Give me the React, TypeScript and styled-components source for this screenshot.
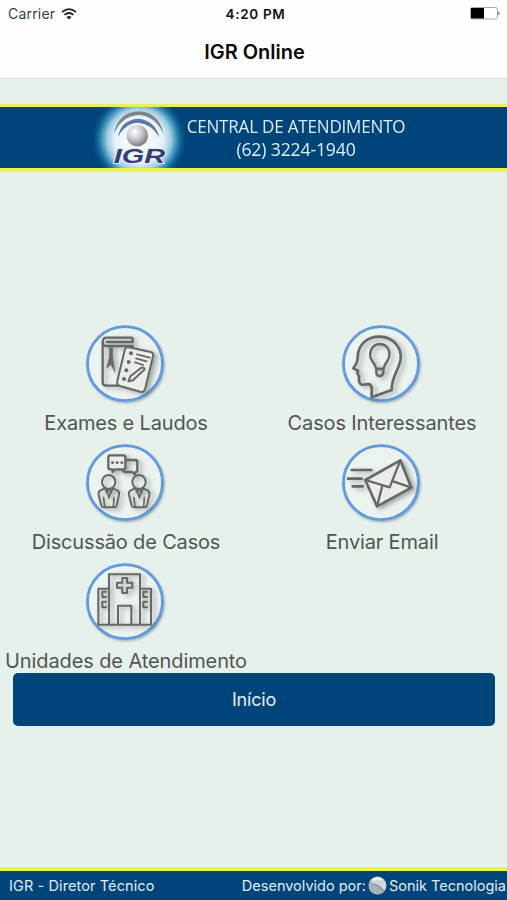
import React from "react";
import styled, { createGlobalStyle } from "styled-components";

const navy = "#00457a";
const mint = "#e6f1eb";
const lime = "#eaf250";

const GlobalStyle = createGlobalStyle`
  * { box-sizing: border-box; }
  body { margin: 0; background: ${mint}; font-family: Inter, "Liberation Sans", sans-serif; }
`;

const Screen = styled.div`
  width: 507px;
  height: 900px;
  display: flex;
  flex-direction: column;
  background: ${mint};
  overflow: hidden;
`;

const Header = styled.header`
  height: 79px;
  background: #fefefe;
  border-bottom: 1px solid #d9dedb;
`;

const StatusBar = styled.div`
  height: 27px;
  display: grid;
  grid-template-columns: 1fr auto 1fr;
  align-items: center;
  padding: 0 7px 0 8px;
`;

const Carrier = styled.div`
  display: flex;
  align-items: center;
  gap: 6px;
  font-size: 14px;
  letter-spacing: 0.2px;
  color: #3c3c3c;
`;

const Clock = styled.div`
  padding-left: 3px;
  font-size: 13.5px;
  font-weight: 600;
  letter-spacing: 0.7px;
  color: #111;
`;

const BatterySlot = styled.div`
  display: flex;
  justify-content: flex-end;
`;

const Title = styled.h1`
  margin: 0;
  height: 51px;
  line-height: 51px;
  text-align: center;
  font-size: 20px;
  font-weight: 600;
  letter-spacing: 0;
  color: #0a0a0a;
  padding-left: 2px;
`;

const Banner = styled.section`
  margin-top: 25px;
  height: 68px;
  flex: none;
  display: flex;
  border-top: 3px solid ${lime};
  border-bottom: 4px solid ${lime};
  background: ${navy};
  padding-left: 90px;
`;

const Phone = styled.div`
  width: 224px;
  margin-left: -16px;
  padding-top: 8px;
  text-align: center;
  font-family: "Open Sans", "Noto Sans", sans-serif;
  font-size: 19px;
  line-height: 23px;
  color: #dfedfa;
  white-space: nowrap;
`;

const PhoneLine = styled.div<{ $stretch: number }>`
  display: flex;
  justify-content: center;
  letter-spacing: -0.2px;
  transform: scaleX(${(p) => p.$stretch});
`;

const Menu = styled.main`
  margin-top: 146px;
  display: grid;
  grid-template-columns: 252px 252px;
  column-gap: 4px;
  grid-auto-rows: 119px;
`;

const MenuItem = styled.div`
  display: flex;
  flex-direction: column;
  align-items: center;
  svg { display: block; flex: none; }
`;

const Label = styled.span<{ $spacing?: number }>`
  font-size: 20px;
  line-height: 31px;
  color: #505653;
  white-space: nowrap;
  letter-spacing: ${(p) => p.$spacing ?? 0}px;
`;

const HomeButton = styled.button`
  margin: -2px 12px 0 13px;
  height: 53px;
  flex: none;
  border: 0;
  border-radius: 5px;
  background: ${navy};
  color: #e3edf6;
  font: 400 18px Inter, sans-serif;
  letter-spacing: -0.2px;
`;

const Footer = styled.footer`
  margin-top: auto;
  height: 33px;
  flex: none;
  display: flex;
  align-items: center;
  justify-content: space-between;
  padding: 0 1px 0 9px;
  border-top: 4px solid ${lime};
  background: ${navy};
  color: #e0ebf4;
  font-size: 14.5px;
  white-space: nowrap;
`;

const Credit = styled.div`
  display: flex;
  align-items: center;
  gap: 2px;
`;

const CreditText = styled.span<{ $spacing: number }>`
  letter-spacing: ${(p) => p.$spacing}px;
`;

const Wifi = () => (
  <svg width="16" height="12" viewBox="0 0 16 12" fill="none" stroke="#222" strokeWidth="1.8">
    <path d="M1 4.2Q8-2 15 4.2M3.5 6.9Q8 3 12.5 6.9" />
    <path d="M5.5 9Q8 6.8 10.5 9L8 11.5Z" fill="#222" stroke="none" />
  </svg>
);

const Battery = () => (
  <svg width="30" height="13" viewBox="0 0 30 13">
    <rect x=".5" y=".5" width="27" height="11.5" rx="2" fill="#fff" stroke="#aaa" />
    <path d="M1 1h13v10.5H1z" fill="#000" />
    <path d="M28.5 4.3q2 2 0 4z" fill="#333" />
  </svg>
);

const IgrLogo = () => (
  <svg width="110" height="61" viewBox="0 27 330 183">
    <defs>
      <radialGradient id="glow">
        <stop offset="0" stopColor="#fff" />
        <stop offset=".5" stopColor="#e6f2f7" />
        <stop offset=".66" stopColor="#9bcbe0" />
        <stop offset=".82" stopColor="#1f7fae" stopOpacity=".85" />
        <stop offset="1" stopColor={navy} stopOpacity="0" />
      </radialGradient>
      <radialGradient id="ball" cx=".38" cy=".32" r=".7">
        <stop offset="0" stopColor="#fff" />
        <stop offset=".45" stopColor="#cfcfd2" />
        <stop offset="1" stopColor="#7b7b80" />
      </radialGradient>
    </defs>
    <ellipse cx="147" cy="124" rx="146" ry="142" fill="url(#glow)" />
    <path d="M72 107Q84 43 147 40Q208 43 221 110Q198 55 147 51Q96 53 72 107Z" fill="#7d858f" />
    <path d="M84 116Q93 66 144 62Q194 66 208 117Q182 76 144 74Q108 74 84 116Z" fill="#5b77ae" />
    <circle cx="142" cy="113" r="32" fill="url(#ball)" />
    <text x="71" y="195" textLength="154" lengthAdjust="spacingAndGlyphs" fontFamily="Liberation Sans, sans-serif" fontSize="59" fontStyle="italic" fontWeight="700" fill="#363b78" stroke="#e6eff6" strokeWidth="5" paintOrder="stroke">IGR</text>
  </svg>
);

const SonikMark = () => (
  <svg width="19" height="19" viewBox="0 0 19 19">
    <circle cx="9.5" cy="9.5" r="9" fill="#d1d5d8" />
    <path d="M1 7Q4 10 8 10T16 16Q12 19 8 18Q2 17 1 11Z" fill="#a8b0b6" />
    <path d="M1.3 5Q3.5 8.7 8 9T16 15.5" fill="none" stroke="#4e7590" strokeWidth="1" />
    <path d="M5 4Q9 1 14 4" fill="none" stroke="#f6f6f6" strokeWidth="2" />
  </svg>
);

const Disc = ({ dy = 0, children }: { dy?: number; children: React.ReactNode }) => (
  <svg width="92" height="90" viewBox="0 0 276 270" fill="none" stroke="#666865" strokeWidth="7" strokeLinejoin="round" strokeLinecap="round">
    <defs>
      <filter id="shade" x="-20%" y="-20%" width="150%" height="150%">
        <feDropShadow dx="10" dy="6" stdDeviation="6" floodColor="#4d5550" floodOpacity=".45" />
      </filter>
      <filter id="rim" x="-20%" y="-20%" width="150%" height="150%">
        <feDropShadow dx="3" dy="4" stdDeviation="3" floodColor="#66706a" floodOpacity=".5" />
      </filter>
    </defs>
    <ellipse cx="135" cy="137" rx="112.5" ry="111" fill="#ebf3ef" stroke="#6399df" strokeWidth="8.5" filter="url(#rim)" />
    <g transform={`translate(0 ${dy})`} filter="url(#shade)">{children}</g>
  </svg>
);

const ReportsIcon = () => (
  <Disc>
    <path d="M158 72V62Q158 59 153 59H80Q68 59 68 73V193Q68 203 80 203H115M158 84H81Q69 84 69 74M80 72H158" />
    <path d="M88 89Q91 119 80 150L93 139L105 163Q96 119 98 89Z" fill="#666865" strokeWidth="2" />
    <path d="M143 87L212 102Q222 105 219 115L195 214Q192 224 181 221L120 204Q109 200 112 189L134 97Q136 87 143 87Z" fill="#e9eeeb" strokeWidth="6" />
    <path d="M171 109L209 119M168 121L200 130M165 133L190 141" strokeWidth="5" />
    <path d="M145 190L151 175L184 149Q192 146 194 154L159 187Z" strokeWidth="6" />
    <g fill="#666865" stroke="none"><circle cx="153" cy="106" r="6" /><circle cx="146" cy="132" r="6" /><circle cx="139" cy="157" r="6" /><circle cx="132" cy="183" r="6" /></g>
  </Disc>
);

const IdeaIcon = () => (
  <Disc>
    <path d="M107 238V208Q104 196 91 199Q72 204 69 190L69 174L64 166L66 158L52 151Q65 133 65 119C65 79 95 55 132 56C172 57 197 89 194 122C192 151 166 175 167 216Z" strokeWidth="8" />
    <path d="M120 152Q119 143 109 130C94 108 107 79 131 78C157 79 168 105 154 129Q144 143 143 152ZM121 153H142V165Q140 174 131 174Q122 174 121 165Z" strokeWidth="7" />
  </Disc>
);

const Person = ({ x }: { x: number }) => (
  <g transform={`translate(${x} 0)`} strokeWidth="6">
    <ellipse cx="86" cy="132" rx="20" ry="21" />
    <path d="M74 151L61 157Q54 161 56 171L64 203Q65 208 71 208H103Q108 208 110 202L117 171Q119 161 112 157L98 151" />
    <path d="M76 154L87 176L98 154M80 157H93L87 180ZM71 179L74 207M102 179L100 207" strokeWidth="5" />
  </g>
);

const DiscussionIcon = () => (
  <Disc dy={3}>
    <Person x={0} />
    <Person x={91} />
    <path d="M141 66H166Q172 66 172 72V97Q172 102 167 102L164 109L157 102H134L128 97" />
    <path d="M91 52H130Q136 52 136 58V88Q136 94 130 94H105L98 102V94H91Q85 94 85 88V58Q85 52 91 52Z" fill="#e9eeeb" />
    <path d="M97 74h1M111 74h1M125 74h1" strokeWidth="8" />
  </Disc>
);

const MailIcon = () => (
  <Disc dy={3}>
    <path d="M47 96H106M36 122H77M50 145H80" strokeWidth="8" />
    <path d="M88 126L193 67L226 149L123 205Z" fill="#e8edea" strokeWidth="8" />
    <path d="M88 126L161 148L193 67M123 205L139 143M226 149L174 131" />
  </Disc>
);

const HospitalIcon = () => (
  <Disc>
    <path d="M55 206V98H87M180 98H213V206H55M87 206V55H180V206M114 206V149H154V206" strokeWidth="6" />
    <path d="M127 66H141V80H157V95H141V111H127V95H111V80H127Z" strokeWidth="6" />
    <path d="M78 107H67V123H78M78 137H67V154H78M201 107H190V123H201M201 137H190V154H201" strokeWidth="6" />
  </Disc>
);

const items = [
  { label: "Exames e Laudos", spacing: -0.17, Icon: ReportsIcon },
  { label: "Casos Interessantes", spacing: -0.13, Icon: IdeaIcon },
  { label: "Discussão de Casos", spacing: -0.17, Icon: DiscussionIcon },
  { label: "Enviar Email", spacing: -0.15, Icon: MailIcon },
  { label: "Unidades de Atendimento", spacing: -0.1, Icon: HospitalIcon },
];

export default function App() {
  return (
    <Screen>
      <GlobalStyle />
      <Header>
        <StatusBar>
          <Carrier>Carrier <Wifi /></Carrier>
          <Clock>4:20 PM</Clock>
          <BatterySlot><Battery /></BatterySlot>
        </StatusBar>
        <Title>IGR Online</Title>
      </Header>
      <Banner>
        <IgrLogo />
        <Phone>
          <PhoneLine $stretch={0.895}>CENTRAL DE ATENDIMENTO</PhoneLine>
          <PhoneLine $stretch={0.93}>(62) 3224-1940</PhoneLine>
        </Phone>
      </Banner>
      <Menu>
        {items.map(({ label, spacing, Icon }) => (
          <MenuItem key={label}>
            <Icon />
            <Label $spacing={spacing}>{label}</Label>
          </MenuItem>
        ))}
      </Menu>
      <HomeButton>Início</HomeButton>
      <Footer>
        <CreditText $spacing={0.1}>IGR - Diretor Técnico</CreditText>
        <Credit>
          <CreditText $spacing={0}>Desenvolvido por:</CreditText>
          <SonikMark />
          <CreditText $spacing={0}>Sonik Tecnologia</CreditText>
        </Credit>
      </Footer>
    </Screen>
  );
}
